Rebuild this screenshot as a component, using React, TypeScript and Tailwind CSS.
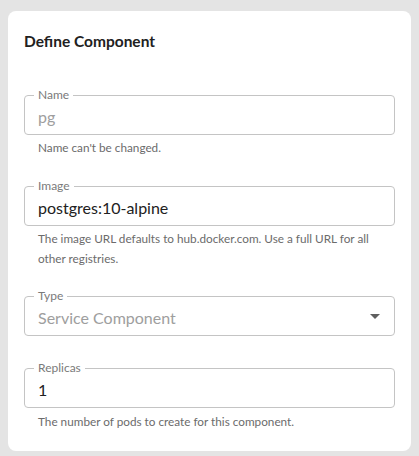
import type { ReactNode } from 'react'

interface FieldProps {
  label: string
  value: string
  disabled?: boolean
  select?: boolean
  className?: string
}

function OutlinedField({ label, value, disabled = false, select = false, className = '' }: FieldProps) {
  return (
    <fieldset
      className={`m-0 min-w-0 rounded-[4px] border border-[#c4c4c4] pl-[9px] pb-[6px] ${
        select ? 'pr-[7px]' : 'pr-[9px]'
      } ${className}`}
    >
      <legend className="px-[4px] text-xs leading-[12px] text-[#7a7a7a]">{label}</legend>
      <div className="mt-[4px] flex h-[23px] items-center justify-between pl-[4px]">
        <span
          className={`text-base leading-[23px] ${disabled ? 'text-[#9e9e9e]' : 'text-[#212121]'}`}
        >
          {value}
        </span>
        {select && (
          <svg viewBox="0 0 24 24" className="h-6 w-6 shrink-0 translate-y-[-2px] fill-[#5f5f5f]">
            <path d="M7 10l5 5 5-5z" />
          </svg>
        )}
      </div>
    </fieldset>
  )
}

function Helper({ children, className = 'mt-[3px]' }: { children: ReactNode; className?: string }) {
  return (
    <p className={`pl-[14px] pr-[14px] text-[11.75px] leading-5 text-[#6b6b6b] ${className}`}>
      {children}
    </p>
  )
}

export default function App() {
  return (
    <div
      className="min-h-[456px] bg-[#e4e4e4] pt-[11px] pb-[5px]"
      style={{ fontFamily: 'Lato, "Liberation Sans", sans-serif' }}
    >
      <div className="mx-2 rounded-lg bg-white px-4 pt-[18px] pb-[19px]">
        <h2 className="text-[15.5px] font-bold leading-6 text-[#212121]">Define Component</h2>

        <OutlinedField className="mt-[36px]" label="Name" value="pg" disabled />
        <Helper>Name can't be changed.</Helper>

        <OutlinedField className="mt-[22px]" label="Image" value="postgres:10-alpine" />
        <Helper>The image URL defaults to hub.docker.com. Use a full URL for all other registries.</Helper>

        <OutlinedField className="mt-[21px]" label="Type" value="Service Component" disabled select />

        <OutlinedField className="mt-[26px]" label="Replicas" value="1" />
        <Helper className="mt-[4px]">The number of pods to create for this component.</Helper>
      </div>
    </div>
  )
}
